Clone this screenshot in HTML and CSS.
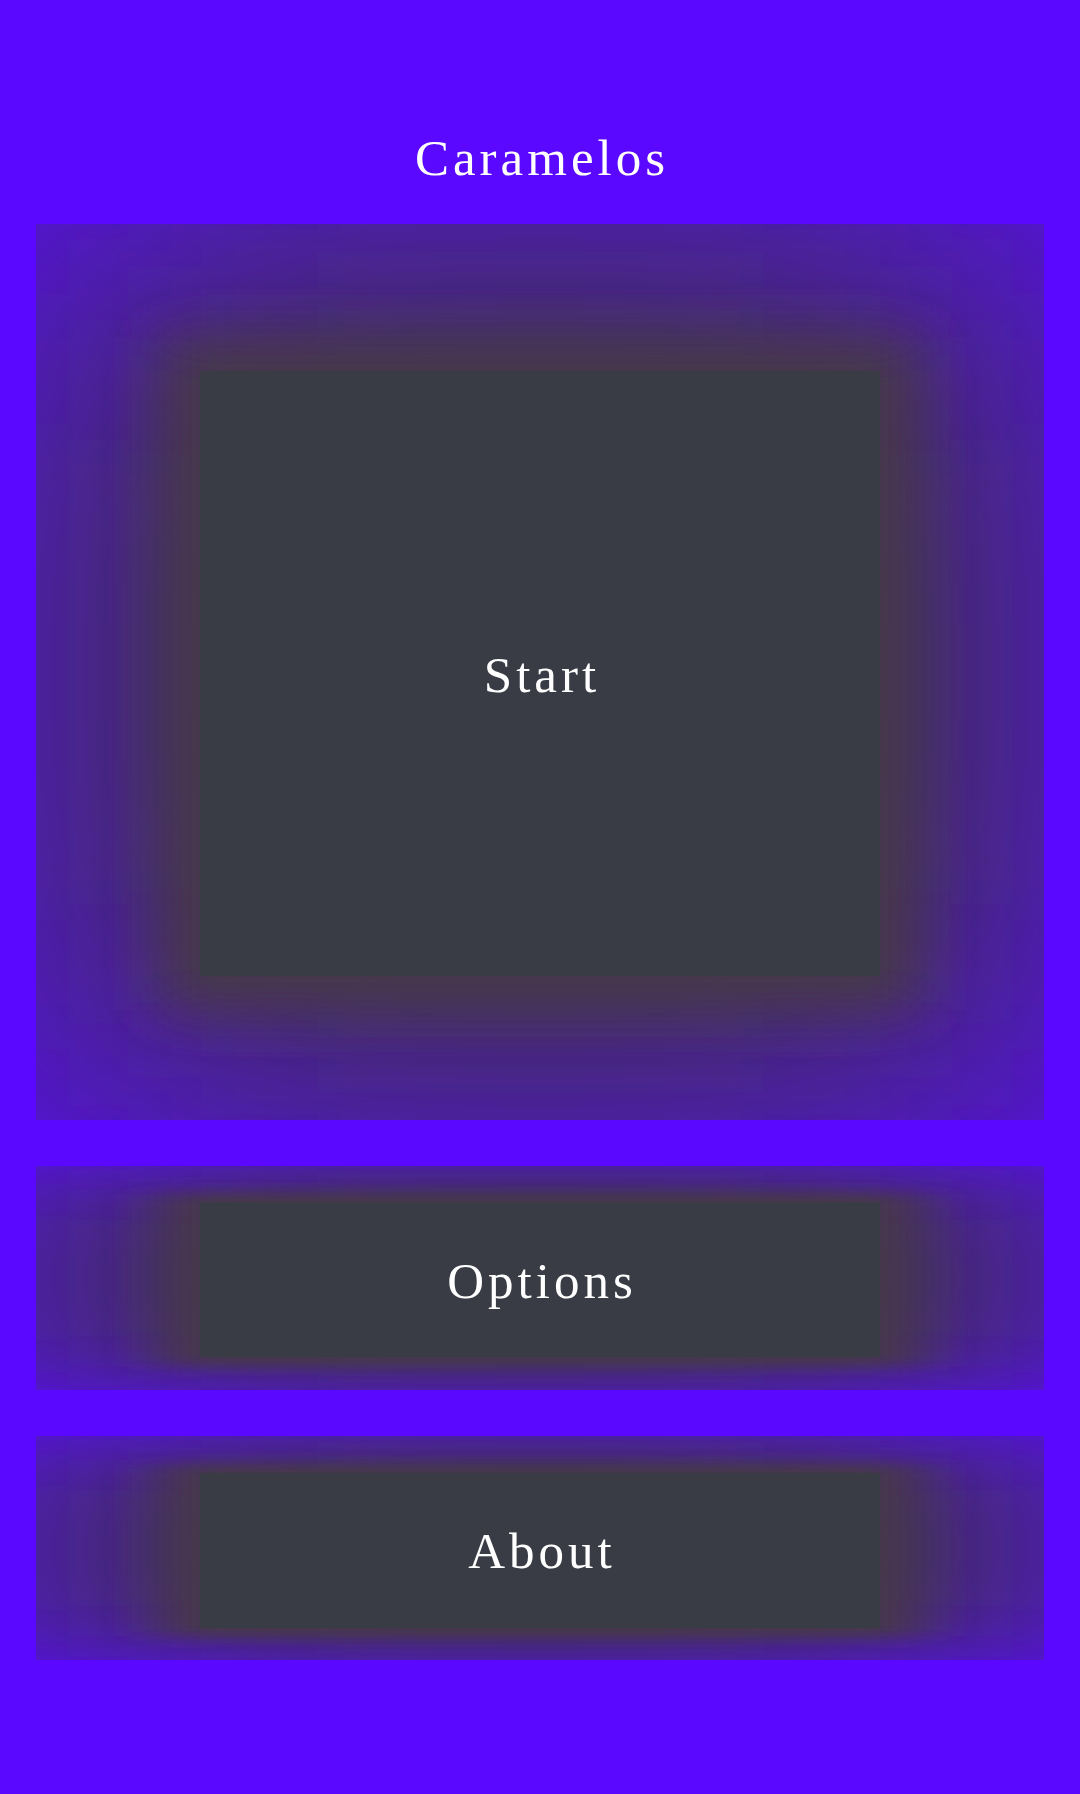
FILE: index.html
```html
<!DOCTYPE html>
<html lang="en">
<head>
<meta charset="utf-8">
<title>Caramelos</title>
<link rel="stylesheet" href="styles.css">
</head>
<body>
<svg class="defs" width="0" height="0" aria-hidden="true">
  <defs>
    <filter id="wide" filterUnits="userSpaceOnUse" x="-1000" y="-1000" width="3000" height="3000">
      <feGaussianBlur stdDeviation="200"/>
    </filter>
    <filter id="narrow" filterUnits="userSpaceOnUse" x="-300" y="-300" width="1600" height="1600">
      <feGaussianBlur stdDeviation="30"/>
    </filter>
  </defs>
</svg>
<main class="screen">
  <h1 class="title">Caramelos</h1>
  <nav class="menu">
    <button class="panel panel-large" type="button">
      <svg class="glow" viewBox="0 0 1000 1000" preserveAspectRatio="none" aria-hidden="true">
        <rect class="halo" x="-25" y="-25" width="1050" height="1050" filter="url(#wide)"/>
        <rect class="ring" x="125" y="126" width="750" height="751" filter="url(#narrow)"/>
        <rect class="core" x="163" y="164" width="674" height="675"/>
      </svg>
      <span class="label">Start</span>
    </button>
    <button class="panel panel-small" type="button">
      <svg class="glow" viewBox="0 0 1000 1000" preserveAspectRatio="none" aria-hidden="true">
        <rect class="halo" x="-25" y="-25" width="1050" height="1050" filter="url(#wide)"/>
        <rect class="ring" x="125" y="123" width="750" height="768" filter="url(#narrow)"/>
        <rect class="core" x="163" y="161" width="674" height="692"/>
      </svg>
      <span class="label">Options</span>
    </button>
    <button class="panel panel-small" type="button">
      <svg class="glow" viewBox="0 0 1000 1000" preserveAspectRatio="none" aria-hidden="true">
        <rect class="halo" x="-25" y="-25" width="1050" height="1050" filter="url(#wide)"/>
        <rect class="ring" x="125" y="127" width="750" height="768" filter="url(#narrow)"/>
        <rect class="core" x="163" y="165" width="674" height="692"/>
      </svg>
      <span class="label">About</span>
    </button>
  </nav>
</main>
</body>
</html>
```
FILE: styles.css
```css
html, body {
  margin: 0;
  padding: 0;
}

body {
  background: #5a08ff;
  width: 1080px;
  height: 1794px;
  overflow: hidden;
  font-family: "Liberation Serif", "DejaVu Serif", serif;
  color: #ffffff;
}

.defs {
  position: absolute;
  width: 0;
  height: 0;
}

.screen {
  padding: 0 36px;
  display: flex;
  flex-direction: column;
}

.title {
  margin: 0 0 41px 0;
  padding: 133px 0 0 4px;
  font-size: 51px;
  line-height: 50px;
  font-weight: 400;
  letter-spacing: 4px;
  text-align: center;
}

.menu {
  display: flex;
  flex-direction: column;
  gap: 46px;
}

.panel {
  appearance: none;
  position: relative;
  overflow: hidden;
  border: 0;
  margin: 0;
  padding: 6px 0 0 4px;
  background: transparent;
  width: 1008px;
  display: flex;
  align-items: center;
  justify-content: center;
  font-family: inherit;
  color: #ffffff;
  cursor: pointer;
}

.panel-large {
  height: 896px;
}

.panel-small {
  height: 224px;
}

.glow {
  position: absolute;
  inset: 0;
  width: 100%;
  height: 100%;
  display: block;
}

.halo {
  fill: #3c3648;
}

.ring {
  fill: #46394a;
}

.core {
  fill: #393c45;
}

.label {
  position: relative;
  font-size: 51px;
  line-height: 50px;
  letter-spacing: 4px;
}
```
